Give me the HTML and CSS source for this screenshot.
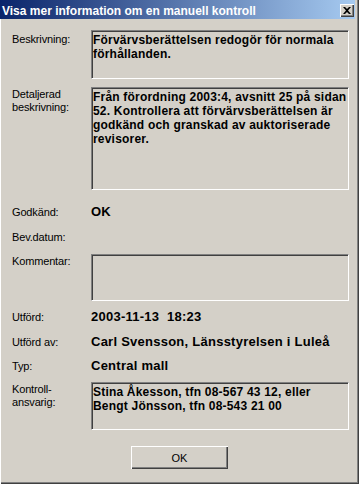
FILE: index.html
```html
<!DOCTYPE html>
<html lang="sv">
<head>
<meta charset="utf-8">
<title>Visa mer information om en manuell kontroll</title>
<link rel="stylesheet" href="styles.css">
</head>
<body>
<div class="window">
  <div class="titlebar">
    <span class="title">Visa mer information om en manuell kontroll</span>
    <span class="close"><svg width="8" height="7" viewBox="0 0 8 7"><path d="M0 0h2l2 2 2-2h2L5 3.5 8 7H6L4 5 2 7H0l3-3.5z" fill="#000"/></svg></span>
  </div>
  <div class="content">
    <div class="row box-row">
      <div class="label label-low">Beskrivning:</div>
      <div class="field f1">Förvärvsberättelsen redogör för normala<br>förhållanden.</div>
    </div>
    <div class="row box-row r2">
      <div class="label">Detaljerad<br>beskrivning:</div>
      <div class="field f2">Från förordning 2003:4, avsnitt 25 på sidan<br>52. Kontrollera att förvärvsberättelsen är<br>godkänd och granskad av auktoriserade<br>revisorer.</div>
    </div>
    <div class="row line-row r3">
      <div class="label">Godkänd:</div>
      <div class="value">OK</div>
    </div>
    <div class="row line-row r4">
      <div class="label">Bev.datum:</div>
      <div class="value"></div>
    </div>
    <div class="row box-row r5">
      <div class="label">Kommentar:</div>
      <div class="field f3"></div>
    </div>
    <div class="row line-row r6">
      <div class="label">Utförd:</div>
      <div class="value">2003-11-13&nbsp; 18:23</div>
    </div>
    <div class="row line-row r7">
      <div class="label">Utförd av:</div>
      <div class="value">Carl Svensson, Länsstyrelsen i Luleå</div>
    </div>
    <div class="row line-row r8">
      <div class="label">Typ:</div>
      <div class="value">Central mall</div>
    </div>
    <div class="row box-row r9">
      <div class="label">Kontroll-<br>ansvarig:</div>
      <div class="field f4">Stina Åkesson, tfn 08-567 43 12, eller<br>Bengt Jönsson, tfn 08-543 21 00</div>
    </div>
    <div class="actions">
      <button class="btn" type="button">OK</button>
    </div>
  </div>
</div>
</body>
</html>
```

FILE: styles.css
```css
* { box-sizing: border-box; }
html, body { margin: 0; padding: 0; }
body {
  width: 359px;
  height: 484px;
  overflow: hidden;
  background: #d4d0c8;
  font-family: "Liberation Sans", Arial, sans-serif;
}
.window {
  width: 359px;
  height: 484px;
  display: flex;
  flex-direction: column;
  background: #d4d0c8;
  padding: 0 4px 4px 0;
  box-shadow: inset 1px 0 0 #ffffff, inset -1px -1px 0 #404040, inset -2px -2px 0 #808080;
}
.titlebar {
  height: 19px;
  display: flex;
  align-items: flex-start;
  background: linear-gradient(to right, #0a246a, #a6caf0);
}
.title {
  color: #fff;
  font-weight: bold;
  font-size: 12px;
  line-height: 15px;
  padding: 4px 0 0 2px;
  white-space: nowrap;
}
.close {
  margin: 4px 1px 0 auto;
  width: 14px;
  height: 13px;
  background: #d4d0c8;
  display: flex;
  align-items: center;
  justify-content: center;
  box-shadow: inset 1px 1px 0 #ffffff, inset -1px -1px 0 #404040, inset -2px -2px 0 #808080;
}
.content {
  display: flex;
  flex-direction: column;
  padding: 11px 0 0 12px;
}
.row { display: flex; }
.box-row { align-items: flex-start; }
.line-row { align-items: baseline; height: 14px; }
.label {
  width: 79px;
  flex: none;
  font-size: 11px;
  letter-spacing: -0.15px;
  line-height: 13px;
  color: #000;
  padding-top: 1px;
}
.line-row .label { line-height: 14px; padding-top: 0; }
.label-low { padding-top: 3px; }
.value, .field {
  font-weight: bold;
  line-height: 14px;
  color: #000;
  white-space: nowrap;
}
.value {
  font-size: 13px;
  letter-spacing: 0.25px;
}
.field {
  font-size: 12px;
  letter-spacing: 0.2px;
  width: 258px;
  background: #d4d0c8;
  border-style: solid;
  border-width: 1px;
  border-color: #808080 #ffffff #ffffff #808080;
  box-shadow: inset 1px 1px 0 #404040;
  padding: 2px 2px 1px 1px;
}
.f1 { height: 49px; }
.f2 { height: 103px; }
.f3 { height: 47px; }
.f4 { height: 48px; }
.r2 { margin-top: 8px; }
.r3 { margin-top: 15px; }
.r4 { margin-top: 11px; }
.r5 { margin-top: 10px; }
.r6 { margin-top: 9px; }
.r7 { margin-top: 11px; }
.r8 { margin-top: 10px; }
.r9 { margin-top: 9px; }
.actions {
  display: flex;
  margin-top: 16px;
  padding-left: 119px;
}
.btn {
  width: 97px;
  height: 23px;
  margin: 0;
  padding: 0;
  border: 0;
  background: #d4d0c8;
  font-family: "Liberation Sans", Arial, sans-serif;
  font-size: 11px;
  color: #000;
  box-shadow: inset 1px 1px 0 #ffffff, inset -1px -1px 0 #404040, inset -2px -2px 0 #808080;
}
```
